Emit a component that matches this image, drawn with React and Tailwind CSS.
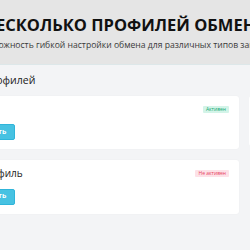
const profiles = [
  { name: "Основной", active: true },
  { name: "Второй профиль", active: false },
];

const Badge = ({ active }) =>
  active ? (
    <span className="px-[3px] h-[7px] leading-[7px] text-[5px] rounded-[1px] bg-[#d3f4e8] text-[#18a874]">
      Активен
    </span>
  ) : (
    <span className="px-[3px] h-[7px] leading-[7px] text-[5px] rounded-[1px] bg-[#fde1e7] text-[#e74562]">
      Не активен
    </span>
  );

const ProfileCard = ({ name, active }) => (
  <div className="bg-white rounded-[3px] shadow-[0_0_2px_rgba(0,0,0,0.04)] px-[10px] pt-[6px] pb-[9px]">
    <div className="flex items-center justify-between h-[14px]">
      <span className="text-[10px] leading-[14px] text-[#222]">{name}</span>
      <Badge active={active} />
    </div>
    <button className="mt-[5px] h-[16px] px-[8px] bg-[#47c2e2] border border-[#30b5da] rounded-[2px] text-white text-[7px] font-bold">
      Редактировать
    </button>
  </div>
);

export default function App() {
  return (
    <div className="w-[250px] h-[250px] overflow-hidden bg-[#e5e5e5] flex flex-col font-['Open_Sans',sans-serif]">
      <div className="h-[64px] flex flex-col items-center pt-[14px]">
        <h1 className="whitespace-nowrap text-[16.5px] leading-[22px] font-bold text-[#111]">
          НЕСКОЛЬКО ПРОФИЛЕЙ ОБМЕНА
        </h1>
        <p className="whitespace-nowrap mt-[2px] text-[8.6px] leading-[14px] text-[#3a3a3a]">
          Возможность гибкой настройки обмена для различных типов заказов
        </p>
      </div>

      <div className="flex-1 bg-[#f3f4f6] border-t border-[#dde7e9] pt-[8px]">
        <div className="-ml-[69px]">
          <h2 className="pl-[13px] text-[10.5px] leading-[14px] text-[#222]">Список профилей</h2>
          <div className="mt-[9px] grid grid-cols-[308px_308px] gap-x-[10px] gap-y-[11px]">
            <ProfileCard {...profiles[0]} />
            <div className="bg-white rounded-[3px] h-[50px]"></div>
            <ProfileCard {...profiles[1]} />
          </div>
        </div>
      </div>
    </div>
  );
}
